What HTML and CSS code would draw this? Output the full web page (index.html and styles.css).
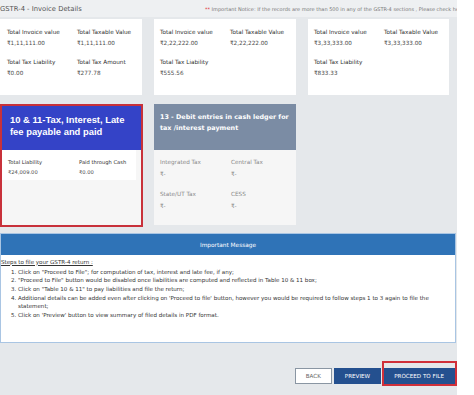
FILE: index.html
```html
<!DOCTYPE html>
<html lang="en">
<head>
<meta charset="utf-8">
<title>GSTR-4 - Invoice Details</title>
<link rel="stylesheet" href="styles.css">
</head>
<body>
<div class="screen">
  <div class="topbar">
    <span class="title">GSTR-4 - Invoice Details</span>
    <span class="notice"><span class="req">**</span> Important Notice: If the records are more than 500 in any of the GSTR-4 sections , Please check here</span>
  </div>

  <div class="row1">
    <div class="card">
      <div class="kv">
        <div><div class="lbl">Total Invoice value</div><div class="val">₹1,11,111.00</div></div>
        <div><div class="lbl">Total Taxable Value</div><div class="val">₹1,11,111.00</div></div>
        <div><div class="lbl">Total Tax Liability</div><div class="val">₹0.00</div></div>
        <div><div class="lbl">Total Tax Amount</div><div class="val">₹277.78</div></div>
      </div>
    </div>
    <div class="card c2">
      <div class="kv">
        <div><div class="lbl">Total Invoice value</div><div class="val">₹2,22,222.00</div></div>
        <div><div class="lbl">Total Taxable Value</div><div class="val">₹2,22,222.00</div></div>
        <div><div class="lbl">Total Tax Liability</div><div class="val">₹555.56</div></div>
      </div>
    </div>
    <div class="card c3">
      <div class="kv">
        <div><div class="lbl">Total Invoice value</div><div class="val">₹3,33,333.00</div></div>
        <div><div class="lbl">Total Taxable Value</div><div class="val">₹3,33,333.00</div></div>
        <div><div class="lbl">Total Tax Liability</div><div class="val">₹833.33</div></div>
      </div>
    </div>
  </div>

  <div class="row2">
    <div class="liab">
      <div class="liab-head">10 &amp; 11-Tax, Interest, Late fee payable and paid</div>
      <div class="liab-row">
        <div><div class="lbl">Total Liability</div><div class="val">₹24,009.00</div></div>
        <div><div class="lbl">Paid through Cash</div><div class="val">₹0.00</div></div>
      </div>
    </div>
    <div class="debit">
      <div class="debit-head">13 - Debit entries in cash ledger for tax /interest payment</div>
      <div class="debit-body">
        <div><div class="lbl">Integrated Tax</div><div class="val">₹-</div></div>
        <div><div class="lbl">Central Tax</div><div class="val">₹-</div></div>
        <div><div class="lbl">State/UT Tax</div><div class="val">₹-</div></div>
        <div><div class="lbl">CESS</div><div class="val">₹-</div></div>
      </div>
    </div>
  </div>

  <div class="msg">
    <div class="msg-head">Important Message</div>
    <div class="msg-body">
      <div class="steps-title">Steps to file your GSTR-4 return :</div>
      <ol class="steps">
        <li>Click on "Proceed to File"; for computation of tax, interest and late fee, if any;</li>
        <li>"Proceed to File" button would be disabled once liabilities are computed and reflected in Table 10 &amp; 11 box;</li>
        <li>Click on "Table 10 &amp; 11" to pay liabilities and file the return;</li>
        <li>Additional details can be added even after clicking on 'Proceed to file' button, however you would be required to follow steps 1 to 3 again to file the<br>statement;</li>
        <li>Click on 'Preview' button to view summary of filed details in PDF format.</li>
      </ol>
    </div>
  </div>

  <div class="actions">
    <button class="btn back" type="button">BACK</button>
    <button class="btn" type="button">PREVIEW</button>
    <button class="btn proceed" type="button">PROCEED TO FILE</button>
  </div>
</div>
</body>
</html>
```

FILE: styles.css
```css
* { box-sizing: border-box; margin: 0; padding: 0; }
body { margin: 0; background: #fff; font-family: "DejaVu Sans", Verdana, sans-serif; }

.screen { width: 457px; height: 395px; background: #e5e8eb; overflow: hidden; }

.topbar { height: 17px; background: #eef0f2; display: flex; align-items: center; white-space: nowrap; overflow: hidden; }
.title { font-size: 6.8px; color: #555; width: 205px; flex: none; }
.notice { font-size: 5px; color: #777; }
.notice .req { color: #e0303a; }

.row1 { display: flex; gap: 12px; margin-top: 2px; height: 76px; }
.card { background: #fff; width: 142px; padding: 8px 0 0 7px; }
.card.c2 { padding-left: 6px; }
.card.c3 { width: 141px; padding-left: 6px; }
.kv { display: grid; grid-template-columns: 70px 1fr; row-gap: 8px; }
.lbl { font-size: 5.7px; line-height: 11px; color: #2f2f2f; white-space: nowrap; }
.val { font-size: 5.7px; line-height: 11px; color: #4a4a4a; white-space: nowrap; }

.row2 { display: flex; gap: 11px; margin-top: 9px; align-items: flex-start; }
.liab { width: 143px; height: 123px; border: 2px solid #c8313a; background: #f6f6f6; }
.liab-head { background: #3443c7; color: #fff; font-family: "Liberation Sans", Arial, sans-serif; font-weight: bold; font-size: 9.4px; line-height: 12px; padding: 8px 8px 0 8px; height: 44px; }
.liab-row { background: #fff; margin-right: 5px; height: 30px; display: grid; grid-template-columns: 71px 1fr; padding: 7px 0 0 6px; }
.liab-row .lbl, .liab-row .val { font-size: 5.2px; line-height: 10px; }

.debit { width: 142px; height: 121px; background: #f6f6f6; }
.debit-head { background: #7b8ca4; color: #fff; font-weight: bold; font-size: 6.4px; line-height: 11px; padding: 7.5px 4px 0 6px; height: 46px; }
.debit-body { display: grid; grid-template-columns: 71px 1fr; row-gap: 8px; padding: 6px 0 0 6px; }
.debit-body .lbl, .debit-body .val { color: #8a8a8a; font-size: 5.7px; line-height: 12px; }

.msg { margin-top: 6px; width: 456px; border: 1px solid #a9c5e3; background: #fff; }
.msg-head { background: #2f73b7; color: #fff; font-size: 5.8px; height: 21px; display: flex; align-items: center; justify-content: center; }
.msg-body { padding: 2.6px 0 22px 0; font-size: 5.55px; line-height: 8.7px; color: #333; }
.steps-title { text-decoration: underline; }
.steps { margin-top: 1.3px; padding-left: 17px; }

.actions { display: flex; justify-content: flex-end; gap: 2px; padding-right: 2px; margin-top: 25px; }
.btn { height: 16px; padding: 0 10px; font-family: "DejaVu Sans", Verdana, sans-serif; font-size: 5.6px; border: 1px solid #24508f; background: #24508f; color: #fff; display: flex; align-items: center; }
.btn.back { background: #fff; color: #666; border-color: #8a96a3; }
.btn.proceed { position: relative; }
.btn.proceed::after { content: ""; position: absolute; top: -8px; bottom: -3px; left: -2px; right: -3px; border: 2px solid #d0303a; }
```
